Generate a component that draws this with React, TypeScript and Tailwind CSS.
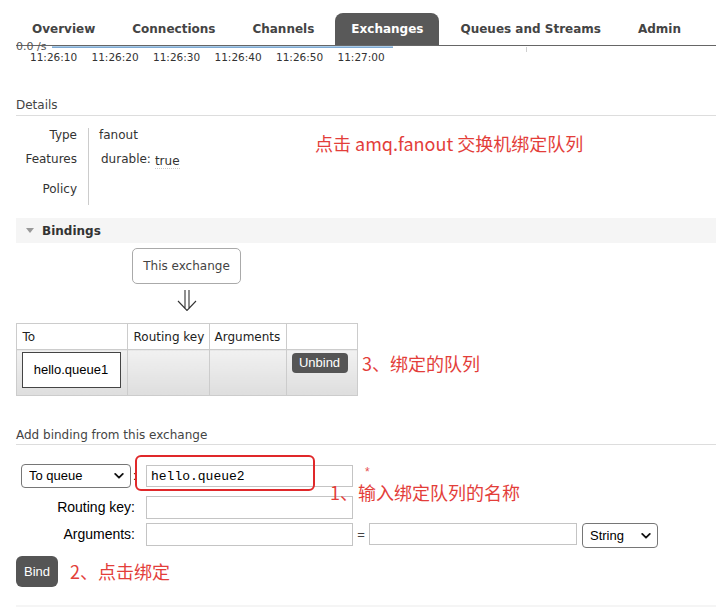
const tabs = ["Overview", "Connections", "Channels", "Exchanges", "Queues and Streams", "Admin"];
const times = ["11:26:10", "11:26:20", "11:26:30", "11:26:40", "11:26:50", "11:27:00"];

function Chevron() {
  return (
    <svg width="10" height="7" viewBox="0 0 10 7" className="pointer-events-none absolute top-1/2 -translate-y-1/2 right-[7px]">
      <path d="M1.2 1.4 L5 5.2 L8.8 1.4" fill="none" stroke="#111" strokeWidth="1.8" strokeLinecap="round" strokeLinejoin="round" />
    </svg>
  );
}

export default function App() {
  return (
    <div className="relative w-[716px] h-[607px] overflow-hidden bg-white font-['DejaVu_Sans',sans-serif] text-[12px] text-[#333]">
      {/* Top navigation */}
      <nav className="ml-[16px] h-[46px] flex items-end border-b border-[#666]">
        {tabs.map((t) => (
          <div
            key={t}
            className={
              t === "Exchanges"
                ? "h-[32px] px-[16px] mr-[5px] flex items-center rounded-t-[8px] font-bold bg-[#595959] text-white"
                : "h-[32px] px-[16px] mr-[5px] flex items-center rounded-t-[8px] font-bold text-[#444]"
            }
          >
            {t}
          </div>
        ))}
      </nav>

      {/* Rate chart (bottom edge only) */}
      <div className="relative h-[24px]">
        <span className="absolute left-[16px] top-[-5px] text-[11px] leading-[11px] text-[#555]">0.0 /s</span>
        <div className="absolute left-[52px] top-0 w-[341px] h-[2px] bg-[#a9cbe8] border-b border-[#7ea9d2]" />
        <div className="absolute left-[526px] top-[1px] w-px h-[5px] bg-[#d0d0d0]" />
        <div className="absolute left-[30px] top-[5px] flex text-[10.5px] leading-[13px] text-[#333]">
          {times.map((t) => (
            <span key={t} className="w-[61.5px]">{t}</span>
          ))}
        </div>
      </div>

      {/* Details */}
      <div className="mt-[27px] ml-[16px] border-b border-[#ddd] leading-[16px] pb-[2px] text-[#444]">Details</div>
      <div className="mt-[12px] ml-[16px] flex">
        <div className="w-[73px] pr-[11px] border-r border-[#ccc] text-right">
          <div className="h-[24px] leading-[14px]">Type</div>
          <div className="h-[24px] leading-[14px]">Features</div>
          <div className="h-[29px] pt-[6px] leading-[14px]">Policy</div>
        </div>
        <div className="pl-[10px]">
          <div className="h-[24px] leading-[14px]">fanout</div>
          <div className="h-[24px] leading-[14px] flex pl-[2px]">
            <span>durable:</span>
            <span className="ml-[4px] mt-[2px] h-[15px] border-b border-dotted border-[#ccc]">true</span>
          </div>
        </div>
      </div>

      {/* Bindings */}
      <div className="mt-[13px] ml-[16px] h-[25px] bg-[#f5f5f5] flex items-center">
        <span className="ml-[10px] w-0 h-0 border-l-[4px] border-r-[4px] border-t-[5px] border-l-transparent border-r-transparent border-t-[#999]" />
        <span className="ml-[8px] font-bold text-[#333]">Bindings</span>
      </div>

      <div className="ml-[16px] w-[341px] flex flex-col items-center">
        <div className="mt-[5px] h-[36px] px-[10px] flex items-center border border-[#aaa] rounded-[5px] text-[#444]">This exchange</div>
        <svg width="20" height="21" viewBox="0 0 20 21" className="mt-[6px]">
          <path d="M8 0 V19 M12 0 V19 M1 11 L10 20.5 L19 11" fill="none" stroke="#333" strokeWidth="1.1" />
        </svg>
        <table className="mt-[12px] w-[341px] table-fixed border-collapse whitespace-nowrap">
          <thead>
            <tr>
              <th className="w-[111px] h-[26px] px-[6px] border border-[#ccc] text-left font-normal text-[#222]">To</th>
              <th className="w-[82px] h-[26px] px-[6px] border border-[#ccc] text-left font-normal text-[#222]">Routing key</th>
              <th className="w-[77px] h-[26px] px-[5px] border border-[#ccc] text-left font-normal text-[#222]">Arguments</th>
              <th className="w-[71px] h-[26px] px-[6px] border border-[#ccc]" />
            </tr>
          </thead>
          <tbody>
            <tr>
              <td className="h-[46px] px-[5px] pt-[2px] align-top border border-[#ccc] bg-linear-to-b from-[#f1f1f1] to-[#dedede]">
                <div className="w-[99px] h-[36px] flex items-center justify-center border border-[#444] bg-white font-['Liberation_Sans',sans-serif] text-[13px] text-black">
                  hello.queue1
                </div>
              </td>
              <td className="border border-[#ccc] bg-linear-to-b from-[#f1f1f1] to-[#dedede]" />
              <td className="border border-[#ccc] bg-linear-to-b from-[#f1f1f1] to-[#dedede]" />
              <td className="px-[5px] pt-[3px] align-top border border-[#ccc] bg-linear-to-b from-[#f1f1f1] to-[#dedede]">
                <button className="w-[56px] h-[20px] rounded-[4px] bg-[#555] text-white font-['Liberation_Sans',sans-serif] text-[13px] leading-[20px]">
                  Unbind
                </button>
              </td>
            </tr>
          </tbody>
        </table>
      </div>

      {/* Add binding */}
      <div className="mt-[31px] ml-[16px] border-b border-[#ddd] leading-[16px] pb-px text-[#444]">Add binding from this exchange</div>

      <div className="ml-[16px] mt-[19px] font-['Liberation_Sans',sans-serif] text-black">
        <div className="flex items-center h-[24px]">
          <div className="relative ml-[5px]">
            <select className="appearance-none w-[110px] h-[24px] pl-[7px] border border-[#767676] rounded-[4px] bg-white text-[13px]">
              <option>To queue</option>
            </select>
            <Chevron />
          </div>
          <span className="w-[15px] pl-[2px] text-[13px]">:</span>
          <input
            readOnly
            value="hello.queue2"
            className="w-[207px] h-[22px] px-[4px] border border-[#c4c4c4] font-['Liberation_Mono',monospace] text-[13px] outline-none"
          />
          <span className="ml-[12px] -mt-[8px] text-[12px] leading-[12px] text-[#e65050]">*</span>
        </div>
        <div className="mt-[8px] flex items-center">
          <span className="w-[130px] pr-[11px] text-right text-[14px]">Routing key:</span>
          <input readOnly className="w-[207px] h-[23px] border border-[#c4c4c4] outline-none" />
        </div>
        <div className="mt-[4px] flex items-start">
          <span className="w-[130px] pr-[11px] text-right text-[14px] leading-[23px]">Arguments:</span>
          <input readOnly className="w-[207px] h-[23px] border border-[#c4c4c4] outline-none" />
          <span className="w-[16px] text-center text-[13px] leading-[23px] text-[#444]">=</span>
          <input readOnly className="w-[208px] h-[22px] border border-[#c4c4c4] outline-none" />
          <div className="relative ml-[5px]">
            <select className="appearance-none w-[76px] h-[25px] pl-[7px] border border-[#767676] rounded-[4px] bg-white text-[13px]">
              <option>String</option>
            </select>
            <Chevron />
          </div>
        </div>
        <div className="mt-[8px] flex items-center">
          <button className="w-[42px] h-[31px] rounded-[6px] bg-[#555] text-white text-[13px]">Bind</button>
          <span className="ml-[12px] font-['Noto_Sans_CJK_SC',sans-serif] text-[18px] text-[#e33e3a]">2、点击绑定</span>
        </div>
      </div>

      <div className="mt-[18px] ml-[16px] h-[10px] bg-[#f5f5f5]" />

      {/* Annotations drawn over the page */}
      <span className="absolute left-[315px] top-[131px] leading-[24px] font-['Noto_Sans_CJK_SC',sans-serif] text-[18px] text-[#e33e3a]">
        点击 amq.fanout 交换机绑定队列
      </span>
      <span className="absolute left-[362px] top-[351px] leading-[24px] font-['Noto_Sans_CJK_SC',sans-serif] text-[18px] text-[#e33e3a]">
        3、绑定的队列
      </span>
      <div className="absolute left-[135px] top-[455px] w-[180px] h-[36px] border-[2.5px] border-[#e0282a] rounded-[6px]" />
      <span className="absolute left-[330px] top-[482px] leading-[20px] font-['Noto_Sans_CJK_SC',sans-serif] text-[18px] text-[#e33e3a]">
        1、输入绑定队列的名称
      </span>
    </div>
  );
}
